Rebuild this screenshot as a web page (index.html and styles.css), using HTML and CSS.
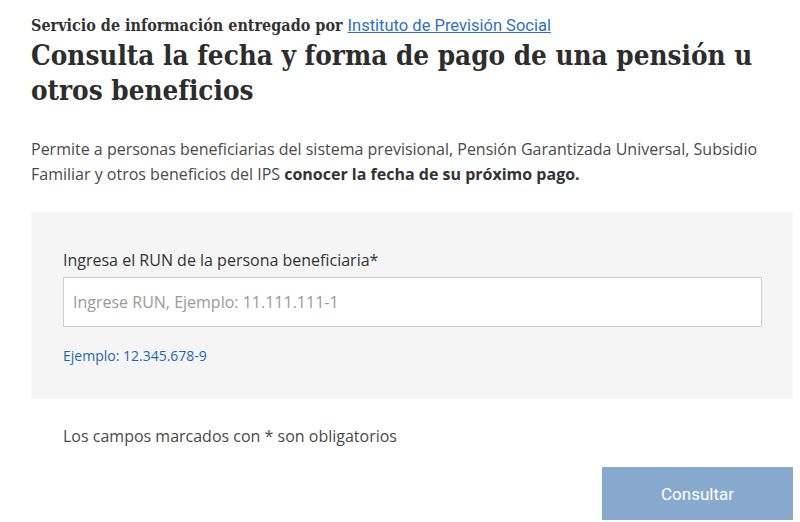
FILE: index.html
```html
<!DOCTYPE html>
<html lang="es">
<head>
<meta charset="utf-8">
<title>Consulta la fecha y forma de pago</title>
<link rel="stylesheet" href="styles.css">
</head>
<body>
<main class="page">
  <p class="provider">Servicio de información entregado por <a class="provider-link" href="#">Instituto de Previsión Social</a></p>
  <h1 class="title">Consulta la fecha y forma de pago de una pensión u otros beneficios</h1>
  <p class="intro">Permite a personas beneficiarias del sistema previsional, Pensión Garantizada Universal, Subsidio Familiar y otros beneficios del IPS <strong>conocer la fecha de su próximo pago.</strong></p>
  <form class="panel">
    <label class="field-label" for="run">Ingresa el RUN de la persona beneficiaria*</label>
    <input class="field-input" id="run" type="text" placeholder="Ingrese RUN, Ejemplo: 11.111.111-1">
    <p class="hint">Ejemplo: 12.345.678-9</p>
  </form>
  <p class="required">Los campos marcados con * son obligatorios</p>
  <div class="actions">
    <button class="submit" type="button">Consultar</button>
  </div>
</main>
</body>
</html>
```
FILE: styles.css
```css
html, body {
  margin: 0;
  padding: 0;
  background: #ffffff;
}

.page {
  padding: 0 7px 0 31px;
  font-family: "Open Sans", "Noto Sans", sans-serif;
  color: #4a4a4a;
}

.provider {
  margin: 0;
  padding-top: 16px;
  font-family: "DejaVu Serif Condensed", "DejaVu Serif", serif;
  font-weight: bold;
  font-size: 16px;
  line-height: 20px;
  color: #333333;
}

.provider-link {
  font-family: Roboto, "Liberation Sans", sans-serif;
  font-weight: normal;
  font-size: 16.5px;
  color: #2f6fc7;
  text-decoration: underline;
}

.title {
  margin: 2px 0 0;
  font-family: "DejaVu Serif Condensed", "DejaVu Serif", serif;
  font-weight: bold;
  font-size: 27.6px;
  line-height: 35px;
  color: #2d2d2d;
  max-width: 740px;
}

.intro {
  margin: 29px 0 0;
  font-size: 16px;
  line-height: 25px;
  color: #4a4a4a;
  max-width: 740px;
}

.intro strong {
  color: #333333;
  font-weight: 700;
}

.panel {
  margin-top: 25px;
  background: #f5f5f5;
  padding: 36px 31px 33px 32px;
  display: flex;
  flex-direction: column;
}

.field-label {
  font-size: 16px;
  line-height: 24px;
  color: #333333;
}

.field-input {
  margin-top: 5px;
  height: 50px;
  box-sizing: border-box;
  border: 1px solid #cfcfcf;
  border-radius: 0;
  background: #ffffff;
  padding: 0 9px;
  font-family: "Open Sans", "Noto Sans", sans-serif;
  font-size: 16px;
  color: #333333;
}

.field-input::placeholder {
  color: #9a9a9a;
}

.hint {
  margin: 19px 0 0;
  font-size: 14px;
  line-height: 20px;
  color: #1f66b3;
}

.required {
  margin: 25px 0 0 32px;
  font-size: 16px;
  line-height: 24px;
  color: #4a4a4a;
}

.actions {
  display: flex;
  justify-content: flex-end;
  margin-top: 19px;
}

.submit {
  width: 191px;
  height: 53px;
  border: none;
  background: #87a9cd;
  color: #ffffff;
  font-family: Roboto, "Liberation Sans", sans-serif;
  font-size: 17px;
}
```
